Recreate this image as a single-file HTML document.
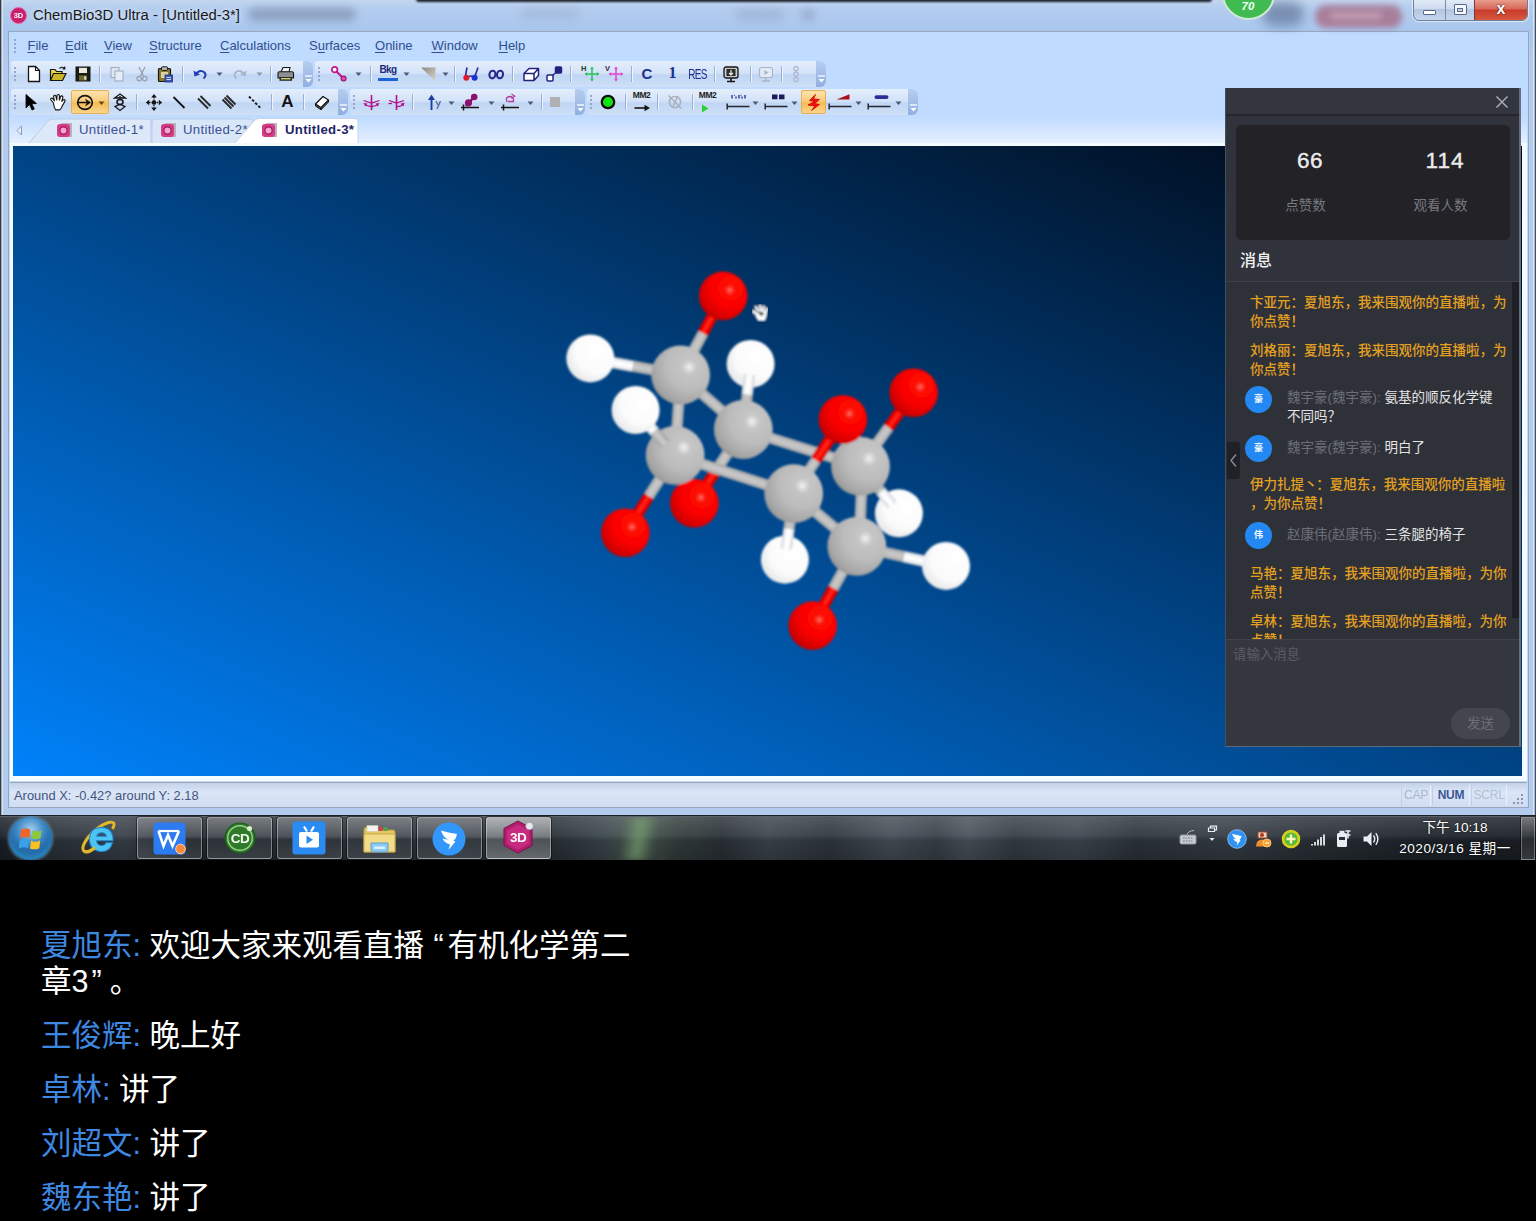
<!DOCTYPE html>
<html lang="zh-CN">
<head>
<meta charset="utf-8">
<title>ChemBio3D Ultra - [Untitled-3*]</title>
<style>
*{box-sizing:border-box;margin:0;padding:0}
html,body{width:1536px;height:1221px;overflow:hidden;background:#000}
body{position:relative;font-family:"Liberation Sans","Noto Sans CJK SC",sans-serif;}
.abs{position:absolute}
/* ---------- window frame ---------- */
#frame{left:0;top:0;width:1536px;height:816px;background:linear-gradient(180deg,#c3d6ef 0,#b4cdef 8px,#a8c6ee 31px,#b3cced 60px,#b3cced 100%);overflow:hidden}
#frame-l{left:0;top:0;width:3px;height:816px;background:linear-gradient(90deg,#2f353e 0,#3a4048 1.3px,#d8e4f4 1.6px,#d8e4f4 3px)}
#frame-r{left:1533px;top:0;width:3px;height:816px;background:linear-gradient(90deg,#d8e6f7 0,#d8e6f7 1.4px,#4a5666 1.7px,#3c4a5c 3px)}
#frame-b{left:0;top:815px;width:1536px;height:1px;background:#1a1e26}
#client{left:8px;top:30.5px;width:1520.5px;height:777px;background:#bfdbff;border:1.5px solid #98a5bb;overflow:hidden}
#title{left:33px;top:6px;font-size:14.9px;color:#1a1a1a;white-space:nowrap;line-height:18px;text-shadow:0 0 5px rgba(255,255,255,.9)}
/* ---------- canvas ---------- */
#cv-border{left:10px;top:143px;width:1517px;height:638px;background:#f4fbff}
#canvas{left:13px;top:145.5px;width:1508.5px;height:630px;background:linear-gradient(to bottom left,#01050f,#0082fa);overflow:hidden}
/* ---------- status bar ---------- */
#status{left:10px;top:782px;width:1517px;height:25px;background:linear-gradient(180deg,#c4d3ea 0,#dbe6f7 40%,#cfdcf2 100%);border-top:1px solid #9da4b2;font-size:12.9px;color:#44557e}
/* ---------- taskbar ---------- */
#taskbar{left:0;top:816px;width:1536px;height:44px;overflow:hidden;background:#2a2f35}
/* ---------- lower chat ---------- */
#chat{left:41px;top:927px;width:610px;font-size:30.5px;line-height:36px;color:#fff;font-family:"Liberation Sans","Noto Sans CJK SC",sans-serif}
#chat p{margin-bottom:18px}
#chat b{font-weight:400;color:#3f88e2}

/* ---------- dark live panel ---------- */
#panel{left:1225px;top:88px;width:296px;height:659px;border-right:2px solid #636e80;background:#31333c;overflow:hidden;border-left:1px solid #474e5c;border-bottom:1px solid #5d6878;font-family:"Liberation Sans","Noto Sans CJK SC",sans-serif}
#p-head{left:0;top:0;width:294px;height:28px;background:#34363f;border-bottom:2px solid #24262c}
#p-stats{left:10px;top:37px;width:274px;height:115px;background:#222227;border-radius:5px}
.num{top:58.5px;width:80px;text-align:center;font-size:22.5px;line-height:28px;color:#ececec;letter-spacing:.5px;font-weight:400;-webkit-text-stroke:.4px #ececec}
.lab{top:108px;margin-left:-1.5px;width:90px;text-align:center;font-size:13.5px;line-height:20px;color:#77797f}
#p-msgt{left:14px;top:162.5px;font-size:16px;line-height:20px;color:#f0f0f0;font-weight:500}
#p-list{left:0;top:193px;width:293px;height:358px;background:#2f3139;border-top:1px solid #3e4049;overflow:hidden}
#p-scroll{left:286px;top:0;width:7px;height:336px;background:#1f2026}
.m{left:24px;width:262px;font-size:13.5px;line-height:19px;margin-top:-.5px;color:#e4a020;font-weight:500;white-space:nowrap}
.u{left:61px;width:226px;font-size:13.5px;line-height:19px;margin-top:-1px;color:#e4e4e4;font-weight:400;white-space:nowrap}
.u i{font-style:normal;color:#6d6f78}
.av{left:19px;width:27px;height:27px;border-radius:50%;background:#2388f2;color:#fff;font-size:9px;line-height:27px;text-align:center;font-weight:700}
#p-input{left:0;top:551px;width:293px;height:108px;background:#35373f;border-top:1px solid #41434c}
#p-ph{left:7px;top:5px;font-size:13.4px;line-height:20px;color:#5b5d66}
#p-send{left:225px;top:68px;width:59px;height:31px;border-radius:16px;background:#44464e;color:#6c6e76;font-size:13.5px;line-height:31px;text-align:center}
#p-tab{left:1px;top:354px;width:13px;height:37px;background:#1f2127;border-radius:0 3px 3px 0}
/*CHROME-CSS-S*/
/* ---------- top chrome ---------- */
.mn{font-size:13px;line-height:18px;color:#2f4f8f;white-space:nowrap}
.mn u{text-decoration-thickness:1px;text-underline-offset:2px}
.tx{line-height:18px;color:#1b2f8f;text-align:center;white-space:nowrap}
.tb{font-size:13.2px;letter-spacing:.3px;line-height:18px;color:#3a4f92;white-space:nowrap}
/*CHROME-CSS-E*//*EXTRA-CSS-S*/
.clk{font-size:13.6px;line-height:18px;color:#fff;text-align:center;white-space:nowrap;text-shadow:0 0 2px rgba(0,0,0,.8)}
/*EXTRA-CSS-E*/</style>
</head>
<body>
<div id="frame" class="abs"></div>
<div id="frame-l" class="abs"></div>
<div id="frame-r" class="abs"></div>
<div id="title" class="abs">ChemBio3D Ultra - [Untitled-3*]</div>
<div id="client" class="abs"></div>
<!--CHROME-S--><div id="chrome"><div class="abs" style="left:14px;top:39px;width:2px;height:2px;background:#7f95bd;border-radius:1px"></div>
<div class="abs" style="left:14px;top:43px;width:2px;height:2px;background:#7f95bd;border-radius:1px"></div>
<div class="abs" style="left:14px;top:47px;width:2px;height:2px;background:#7f95bd;border-radius:1px"></div>
<div class="abs" style="left:14px;top:51px;width:2px;height:2px;background:#7f95bd;border-radius:1px"></div>
<div class="abs mn" style="left:27.5px;top:37px"><u>F</u>ile</div>
<div class="abs mn" style="left:65px;top:37px"><u>E</u>dit</div>
<div class="abs mn" style="left:104px;top:37px"><u>V</u>iew</div>
<div class="abs mn" style="left:149px;top:37px"><u>S</u>tructure</div>
<div class="abs mn" style="left:220px;top:37px"><u>C</u>alculations</div>
<div class="abs mn" style="left:309px;top:37px">S<u>u</u>rfaces</div>
<div class="abs mn" style="left:375px;top:37px"><u>O</u>nline</div>
<div class="abs mn" style="left:431.5px;top:37px"><u>W</u>indow</div>
<div class="abs mn" style="left:498.5px;top:37px"><u>H</u>elp</div>
<div class="abs" style="left:11px;top:60.5px;width:302px;height:26.0px;background:linear-gradient(180deg,#e4eefc 0,#d4e3f9 45%,#c0d6f4 55%,#cfe0f7 100%);border-radius:3px 6px 6px 3px"></div>
<div class="abs" style="left:303px;top:60.5px;width:10px;height:26.0px;background:linear-gradient(180deg,#b7cdf0 0,#8fafe0 100%);border-radius:0 6px 6px 0"></div>
<svg class="abs" style="left:303.5px;top:75.0px" width="9" height="9" viewBox="0 0 9 9"><path d="M1 1 H8" stroke="#fff" stroke-width="1.3"/><path d="M1.5 4 L7.5 4 L4.5 7.5 Z" fill="#fff"/></svg>
<div class="abs" style="left:315px;top:60.5px;width:511px;height:26.0px;background:linear-gradient(180deg,#e4eefc 0,#d4e3f9 45%,#c0d6f4 55%,#cfe0f7 100%);border-radius:3px 6px 6px 3px"></div>
<div class="abs" style="left:816px;top:60.5px;width:10px;height:26.0px;background:linear-gradient(180deg,#b7cdf0 0,#8fafe0 100%);border-radius:0 6px 6px 0"></div>
<svg class="abs" style="left:816.5px;top:75.0px" width="9" height="9" viewBox="0 0 9 9"><path d="M1 1 H8" stroke="#fff" stroke-width="1.3"/><path d="M1.5 4 L7.5 4 L4.5 7.5 Z" fill="#fff"/></svg>
<div class="abs" style="left:11px;top:89px;width:337px;height:26px;background:linear-gradient(180deg,#e4eefc 0,#d4e3f9 45%,#c0d6f4 55%,#cfe0f7 100%);border-radius:3px 6px 6px 3px"></div>
<div class="abs" style="left:338px;top:89px;width:10px;height:26px;background:linear-gradient(180deg,#b7cdf0 0,#8fafe0 100%);border-radius:0 6px 6px 0"></div>
<svg class="abs" style="left:338.5px;top:103.5px" width="9" height="9" viewBox="0 0 9 9"><path d="M1 1 H8" stroke="#fff" stroke-width="1.3"/><path d="M1.5 4 L7.5 4 L4.5 7.5 Z" fill="#fff"/></svg>
<div class="abs" style="left:350px;top:89px;width:235px;height:26px;background:linear-gradient(180deg,#e4eefc 0,#d4e3f9 45%,#c0d6f4 55%,#cfe0f7 100%);border-radius:3px 6px 6px 3px"></div>
<div class="abs" style="left:575px;top:89px;width:10px;height:26px;background:linear-gradient(180deg,#b7cdf0 0,#8fafe0 100%);border-radius:0 6px 6px 0"></div>
<svg class="abs" style="left:575.5px;top:103.5px" width="9" height="9" viewBox="0 0 9 9"><path d="M1 1 H8" stroke="#fff" stroke-width="1.3"/><path d="M1.5 4 L7.5 4 L4.5 7.5 Z" fill="#fff"/></svg>
<div class="abs" style="left:587px;top:89px;width:331px;height:26px;background:linear-gradient(180deg,#e4eefc 0,#d4e3f9 45%,#c0d6f4 55%,#cfe0f7 100%);border-radius:3px 6px 6px 3px"></div>
<div class="abs" style="left:908px;top:89px;width:10px;height:26px;background:linear-gradient(180deg,#b7cdf0 0,#8fafe0 100%);border-radius:0 6px 6px 0"></div>
<svg class="abs" style="left:908.5px;top:103.5px" width="9" height="9" viewBox="0 0 9 9"><path d="M1 1 H8" stroke="#fff" stroke-width="1.3"/><path d="M1.5 4 L7.5 4 L4.5 7.5 Z" fill="#fff"/></svg>
<div class="abs" style="left:14px;top:66.5px;width:2px;height:2px;background:#7f95bd;border-radius:1px"></div>
<div class="abs" style="left:14px;top:70.5px;width:2px;height:2px;background:#7f95bd;border-radius:1px"></div>
<div class="abs" style="left:14px;top:74.5px;width:2px;height:2px;background:#7f95bd;border-radius:1px"></div>
<div class="abs" style="left:14px;top:78.5px;width:2px;height:2px;background:#7f95bd;border-radius:1px"></div>
<div class="abs" style="left:318px;top:66.5px;width:2px;height:2px;background:#7f95bd;border-radius:1px"></div>
<div class="abs" style="left:318px;top:70.5px;width:2px;height:2px;background:#7f95bd;border-radius:1px"></div>
<div class="abs" style="left:318px;top:74.5px;width:2px;height:2px;background:#7f95bd;border-radius:1px"></div>
<div class="abs" style="left:318px;top:78.5px;width:2px;height:2px;background:#7f95bd;border-radius:1px"></div>
<div class="abs" style="left:14px;top:95px;width:2px;height:2px;background:#7f95bd;border-radius:1px"></div>
<div class="abs" style="left:14px;top:99px;width:2px;height:2px;background:#7f95bd;border-radius:1px"></div>
<div class="abs" style="left:14px;top:103px;width:2px;height:2px;background:#7f95bd;border-radius:1px"></div>
<div class="abs" style="left:14px;top:107px;width:2px;height:2px;background:#7f95bd;border-radius:1px"></div>
<div class="abs" style="left:353px;top:95px;width:2px;height:2px;background:#7f95bd;border-radius:1px"></div>
<div class="abs" style="left:353px;top:99px;width:2px;height:2px;background:#7f95bd;border-radius:1px"></div>
<div class="abs" style="left:353px;top:103px;width:2px;height:2px;background:#7f95bd;border-radius:1px"></div>
<div class="abs" style="left:353px;top:107px;width:2px;height:2px;background:#7f95bd;border-radius:1px"></div>
<div class="abs" style="left:590px;top:95px;width:2px;height:2px;background:#7f95bd;border-radius:1px"></div>
<div class="abs" style="left:590px;top:99px;width:2px;height:2px;background:#7f95bd;border-radius:1px"></div>
<div class="abs" style="left:590px;top:103px;width:2px;height:2px;background:#7f95bd;border-radius:1px"></div>
<div class="abs" style="left:590px;top:107px;width:2px;height:2px;background:#7f95bd;border-radius:1px"></div>
<svg class="abs" style="left:25.0px;top:64.5px" width="18" height="18" viewBox="0 0 18 18"><path d="M3.5 1.5 H10.5 L14.5 5.5 V16.5 H3.5 Z" fill="#fff" stroke="#151515" stroke-width="1.3"/><path d="M10.5 1.5 V5.5 H14.5" fill="none" stroke="#151515" stroke-width="1.1"/></svg>
<svg class="abs" style="left:48.5px;top:64.5px" width="18" height="18" viewBox="0 0 18 18"><path d="M1.5 15.5 V4.5 H6 L7.5 6.5 H13 V8.5" fill="#e8d44a" stroke="#151515" stroke-width="1.2"/><path d="M1.5 15.5 L4.5 8.5 H17 L13.5 15.5 Z" fill="#c9b62a" stroke="#151515" stroke-width="1.2"/><path d="M10.5 3.5 Q13 1 15.5 3.5 M15.8 1.5 V4 H13.4" fill="none" stroke="#151515" stroke-width="1.1"/></svg>
<svg class="abs" style="left:73.5px;top:64.5px" width="18" height="18" viewBox="0 0 18 18"><rect x="2" y="2" width="14" height="14" fill="#1b1b14" stroke="#151515" stroke-width="1"/><rect x="5" y="2.8" width="8" height="5.2" fill="#e9e9e0"/><rect x="5" y="10.5" width="8" height="5" fill="#6b6a2a"/><rect x="10.2" y="11.3" width="2" height="3.4" fill="#ddd"/></svg>
<div class="abs" style="left:98.5px;top:65.5px;width:1px;height:16px;background:#9ab0d4"></div>
<div class="abs" style="left:99.5px;top:65.5px;width:1px;height:16px;background:#eef4fd"></div>
<svg class="abs" style="left:107.5px;top:64.5px" width="18" height="18" viewBox="0 0 18 18"><rect x="3" y="2.5" width="8" height="10" fill="#dfe6f2" stroke="#9aa7bd"/><rect x="7" y="6" width="8" height="10" fill="#e6ecf6" stroke="#9aa7bd"/></svg>
<svg class="abs" style="left:132.5px;top:64.5px" width="18" height="18" viewBox="0 0 18 18"><path d="M6 2 L10.5 11 M12 2 L7.5 11" stroke="#98a3b6" stroke-width="1.4" fill="none"/><circle cx="6.2" cy="13.6" r="2.2" fill="none" stroke="#98a3b6" stroke-width="1.3"/><circle cx="11.8" cy="13.6" r="2.2" fill="none" stroke="#98a3b6" stroke-width="1.3"/></svg>
<svg class="abs" style="left:156.0px;top:64.5px" width="18" height="18" viewBox="0 0 18 18"><rect x="2.5" y="3.5" width="12" height="13" rx="1" fill="#8a7a2c" stroke="#151515" stroke-width="1.2"/><rect x="5.5" y="1.8" width="6" height="3.6" rx="1" fill="#b9b9b9" stroke="#151515" stroke-width="1"/><rect x="5" y="7" width="7" height="6" fill="#d9d2a2"/><rect x="9" y="10" width="7.5" height="7" fill="#3957b8" stroke="#1d2f7a" stroke-width="0.8"/><path d="M10.5 12.5 H15 M10.5 14.5 H15" stroke="#dfe6ff" stroke-width="0.9"/></svg>
<div class="abs" style="left:182.0px;top:65.5px;width:1px;height:16px;background:#9ab0d4"></div>
<div class="abs" style="left:183.0px;top:65.5px;width:1px;height:16px;background:#eef4fd"></div>
<svg class="abs" style="left:191.0px;top:64.5px" width="18" height="18" viewBox="0 0 18 18"><path d="M4.5 9.5 Q9 3.5 13.5 7.5 Q16 10.5 12.5 13.5" fill="none" stroke="#2340b0" stroke-width="2"/><path d="M2.5 5.5 L3.5 11.5 L9 9.5 Z" fill="#2340b0"/></svg>
<svg class="abs" style="left:215.5px;top:71.0px" width="7" height="6" viewBox="0 0 7 6"><path d="M0.5 1.5 L6.5 1.5 L3.5 5 Z" fill="#4a5a78"/></svg>
<svg class="abs" style="left:231.0px;top:64.5px" width="18" height="18" viewBox="0 0 18 18"><path d="M13.5 9.5 Q9 3.5 4.5 7.5 Q2 10.5 5.5 13.5" fill="none" stroke="#aab4c8" stroke-width="1.8"/><path d="M15.5 5.5 L14.5 11.5 L9 9.5 Z" fill="#aab4c8"/></svg>
<svg class="abs" style="left:255.5px;top:71.0px" width="7" height="6" viewBox="0 0 7 6"><path d="M0.5 1.5 L6.5 1.5 L3.5 5 Z" fill="#8b98b0"/></svg>
<div class="abs" style="left:269.5px;top:65.5px;width:1px;height:16px;background:#9ab0d4"></div>
<div class="abs" style="left:270.5px;top:65.5px;width:1px;height:16px;background:#eef4fd"></div>
<svg class="abs" style="left:276.0px;top:64.5px" width="20" height="18" viewBox="0 0 20 18"><path d="M5 7 L7 2.5 H14 L13 7" fill="#f1f1f1" stroke="#151515" stroke-width="1.1"/><path d="M2 8 Q2 6.8 3.5 6.8 H16 Q17.5 6.8 17.5 8 V13 H2 Z" fill="#8c8f94" stroke="#151515" stroke-width="1.1"/><rect x="3.5" y="12" width="12.5" height="3.8" fill="#2a2a2a"/><rect x="5" y="13" width="9.5" height="1.4" fill="#cfd66a"/></svg>
<svg class="abs" style="left:330.0px;top:64.5px" width="18" height="18" viewBox="0 0 18 18"><path d="M5 5 L13 13" stroke="#c2188c" stroke-width="2.2"/><circle cx="4.6" cy="4.6" r="2.8" fill="#fff" stroke="#c2188c" stroke-width="1.7"/><circle cx="13.6" cy="13.6" r="2.4" fill="#e24bb0" stroke="#a01070" stroke-width="1.2"/></svg>
<svg class="abs" style="left:354.5px;top:71.0px" width="7" height="6" viewBox="0 0 7 6"><path d="M0.5 1.5 L6.5 1.5 L3.5 5 Z" fill="#4a5a78"/></svg>
<div class="abs" style="left:369.5px;top:65.5px;width:1px;height:16px;background:#9ab0d4"></div>
<div class="abs" style="left:370.5px;top:65.5px;width:1px;height:16px;background:#eef4fd"></div>
<div class="abs" style="left:378px;top:63.5px;width:20px;font-size:10px;line-height:12px;color:#1a2a7a;letter-spacing:-0.6px;font-weight:700;text-align:center">Bkg</div>
<div class="abs" style="left:378px;top:77.5px;width:20px;height:3.5px;background:#1c63d8"></div>
<svg class="abs" style="left:402.5px;top:71.0px" width="7" height="6" viewBox="0 0 7 6"><path d="M0.5 1.5 L6.5 1.5 L3.5 5 Z" fill="#4a5a78"/></svg>
<svg class="abs" style="left:418.5px;top:64.5px" width="18" height="18" viewBox="0 0 18 18"><defs><linearGradient id="tg" x1="0" y1="0" x2="1" y2="1"><stop offset="0" stop-color="#8d8780"/><stop offset="1" stop-color="#d9d6d0"/></linearGradient></defs><path d="M2 2.5 H16.5 V16.5 Z" fill="url(#tg)"/></svg>
<svg class="abs" style="left:441.5px;top:71.0px" width="7" height="6" viewBox="0 0 7 6"><path d="M0.5 1.5 L6.5 1.5 L3.5 5 Z" fill="#4a5a78"/></svg>
<div class="abs" style="left:453.5px;top:65.5px;width:1px;height:16px;background:#9ab0d4"></div>
<div class="abs" style="left:454.5px;top:65.5px;width:1px;height:16px;background:#eef4fd"></div>
<svg class="abs" style="left:462.0px;top:64.5px" width="19" height="18" viewBox="0 0 19 18"><path d="M5 2.5 L3.5 11 M16 2.5 L13 11" stroke="#2a2a9a" stroke-width="1.6" fill="none"/><path d="M6 12.5 Q9 9.5 11 12.5" stroke="#2a2a9a" stroke-width="1.4" fill="none"/><circle cx="4.3" cy="12.8" r="3" fill="#e01a2a"/><circle cx="12.6" cy="12.8" r="3" fill="#1a30d8"/></svg>
<svg class="abs" style="left:487.0px;top:64.5px" width="19" height="18" viewBox="0 0 19 18"><ellipse cx="5.4" cy="9.5" rx="3" ry="3.8" fill="none" stroke="#27278f" stroke-width="2" transform="rotate(14 5.4 9.5)"/><ellipse cx="13" cy="9.5" rx="3" ry="3.8" fill="none" stroke="#27278f" stroke-width="2" transform="rotate(14 13 9.5)"/></svg>
<div class="abs" style="left:512.0px;top:65.5px;width:1px;height:16px;background:#9ab0d4"></div>
<div class="abs" style="left:513.0px;top:65.5px;width:1px;height:16px;background:#eef4fd"></div>
<svg class="abs" style="left:521.5px;top:64.5px" width="19" height="18" viewBox="0 0 19 18"><path d="M2 8.5 L7 3.5 H16.5 L12 8.5 Z M2 8.5 H12 V15.5 H2 Z M12 8.5 L16.5 3.5 V10.5 L12 15.5" fill="#fff" stroke="#23237e" stroke-width="1.5" stroke-linejoin="round"/></svg>
<svg class="abs" style="left:544.5px;top:64.5px" width="19" height="18" viewBox="0 0 19 18"><rect x="2" y="10" width="6" height="6" rx="1" fill="#fff" stroke="#23237e" stroke-width="1.5"/><rect x="10.5" y="2" width="6" height="6" rx="1" fill="#23237e" stroke="#23237e" stroke-width="1.5"/><path d="M7.5 10.5 L11 7.5" stroke="#23237e" stroke-width="1.4"/></svg>
<div class="abs" style="left:569.5px;top:65.5px;width:1px;height:16px;background:#9ab0d4"></div>
<div class="abs" style="left:570.5px;top:65.5px;width:1px;height:16px;background:#eef4fd"></div>
<svg class="abs" style="left:581.0px;top:64.0px" width="20" height="19" viewBox="0 0 20 19"><text x="0" y="6.5" font-size="7.5" font-weight="700" fill="#1a3a1a" font-family="Liberation Sans,sans-serif">H</text><path d="M11 3 V17 M4 10 H18" stroke="#2fc25a" stroke-width="1.5"/><path d="M11 3 l-2 2.2 h4 Z M11 17 l-2 -2.2 h4 Z M4 10 l2.2 -2 v4 Z M18 10 l-2.2 -2 v4 Z" fill="#2fc25a"/></svg>
<svg class="abs" style="left:605.0px;top:64.0px" width="20" height="19" viewBox="0 0 20 19"><text x="0" y="6.5" font-size="7.5" font-weight="700" fill="#3a1a3a" font-family="Liberation Sans,sans-serif">V</text><path d="M11 3 V17 M4 10 H18" stroke="#e645d0" stroke-width="1.5"/><path d="M11 3 l-2 2.2 h4 Z M11 17 l-2 -2.2 h4 Z M4 10 l2.2 -2 v4 Z M18 10 l-2.2 -2 v4 Z" fill="#e645d0"/></svg>
<div class="abs" style="left:630.5px;top:65.5px;width:1px;height:16px;background:#9ab0d4"></div>
<div class="abs" style="left:631.5px;top:65.5px;width:1px;height:16px;background:#eef4fd"></div>
<div class="abs tx" style="left:640px;top:64.5px;width:14px;font-size:15px;font-weight:700">C</div>
<div class="abs tx" style="left:665.5px;top:63.5px;width:14px;font-size:16px;font-weight:700;font-family:'Liberation Serif',serif">1</div>
<div class="abs tx" style="left:686px;top:65.5px;width:23px;font-size:10px;letter-spacing:-0.7px;font-weight:400;transform:scaleY(1.4)">RES</div>
<div class="abs" style="left:713.5px;top:65.5px;width:1px;height:16px;background:#9ab0d4"></div>
<div class="abs" style="left:714.5px;top:65.5px;width:1px;height:16px;background:#eef4fd"></div>
<svg class="abs" style="left:722.0px;top:64.5px" width="18" height="18" viewBox="0 0 18 18"><rect x="2" y="2" width="14" height="11" rx="2" fill="#c9c9c9" stroke="#151515" stroke-width="1.3"/><rect x="4.5" y="4" width="9" height="7" fill="#2b2b2b"/><path d="M9 5 V10 M7 8 L9 10 L11 8" stroke="#eee" stroke-width="1.2" fill="none"/><path d="M5 16.5 H13 M9 13 V16" stroke="#151515" stroke-width="1.6"/></svg>
<div class="abs" style="left:749.5px;top:65.5px;width:1px;height:16px;background:#9ab0d4"></div>
<div class="abs" style="left:750.5px;top:65.5px;width:1px;height:16px;background:#eef4fd"></div>
<svg class="abs" style="left:757.0px;top:64.5px" width="18" height="18" viewBox="0 0 18 18"><rect x="2.5" y="2.5" width="13" height="10" rx="2" fill="#e3eaf6" stroke="#a9b5ca" stroke-width="1.2"/><path d="M7.5 5 L11.5 7.5 L7.5 10 Z" fill="#a9b5ca"/><path d="M5 16 H13 M9 13 V16" stroke="#a9b5ca" stroke-width="1.4"/></svg>
<div class="abs" style="left:781.0px;top:65.5px;width:1px;height:16px;background:#9ab0d4"></div>
<div class="abs" style="left:782.0px;top:65.5px;width:1px;height:16px;background:#eef4fd"></div>
<svg class="abs" style="left:791.0px;top:64.5px" width="10" height="18" viewBox="0 0 10 18"><circle cx="5" cy="3.5" r="2.1" fill="none" stroke="#a9b5ca" stroke-width="1.2"/><circle cx="5" cy="9" r="2.1" fill="none" stroke="#a9b5ca" stroke-width="1.2"/><circle cx="5" cy="14.5" r="2.1" fill="none" stroke="#a9b5ca" stroke-width="1.2"/></svg>
<svg class="abs" style="left:22.0px;top:92.5px" width="18" height="19" viewBox="0 0 18 19"><path d="M4 1.5 V15 L7.5 11.5 L10 17 L12.3 16 L9.8 10.7 L14.5 10.5 Z" fill="#000" stroke="#000" stroke-width="0.8" stroke-linejoin="round"/></svg>
<svg class="abs" style="left:48.0px;top:92.5px" width="19" height="19" viewBox="0 0 19 19"><path d="M5.5 10 L3 7 Q2 5.6 3.4 5.2 Q4.3 5.1 5 6 L6.4 7.8 L5.6 3.6 Q5.6 2.2 6.9 2.3 Q7.8 2.5 8 3.6 L8.8 7 L9 2.6 Q9.3 1.3 10.5 1.5 Q11.5 1.8 11.4 3 L11.4 7 L12.6 3.6 Q13.2 2.5 14.2 2.9 Q15.2 3.4 14.8 4.7 L13.8 8.4 L15.2 6.9 Q16.2 6.2 16.9 7 Q17.4 7.8 16.7 8.8 L14.4 12.6 Q13.6 15.6 11.8 16.8 L7.6 16.8 Q5.8 14 5.5 10 Z" fill="#fff" stroke="#151515" stroke-width="1.15" stroke-linejoin="round"/></svg>
<div class="abs" style="left:70.5px;top:90px;width:38px;height:24px;background:linear-gradient(180deg,#fce3ac 0,#f9cd7c 45%,#f6bb55 55%,#fbd68c 100%);border:1px solid #e5b055;border-radius:2px"></div>
<svg class="abs" style="left:76.0px;top:92.5px" width="18" height="19" viewBox="0 0 18 19"><ellipse cx="9" cy="9.5" rx="7.3" ry="6.8" fill="none" stroke="#151515" stroke-width="1.7"/><path d="M1.8 9.5 H11" stroke="#151515" stroke-width="1.5"/><path d="M9 5.5 L15 9.5 L9 13.5 L10.8 9.5 Z" fill="#151515"/></svg>
<svg class="abs" style="left:98.0px;top:99.5px" width="7" height="6" viewBox="0 0 7 6"><path d="M0.5 1.5 L6.5 1.5 L3.5 5 Z" fill="#6a4a10"/></svg>
<svg class="abs" style="left:111.0px;top:92.5px" width="18" height="19" viewBox="0 0 18 19"><path d="M9 1 L14.5 5 L3.5 5 Z" fill="none" stroke="#151515" stroke-width="1.3"/><path d="M9 3 L11.5 5 H6.5 Z" fill="#151515"/><ellipse cx="9" cy="9" rx="3" ry="2.5" fill="none" stroke="#151515" stroke-width="1.5"/><path d="M4 13.5 L9 17.5 L14 13.5 L9 11.5 Z" fill="none" stroke="#151515" stroke-width="1.3"/></svg>
<div class="abs" style="left:135.5px;top:94px;width:1px;height:16px;background:#9ab0d4"></div>
<div class="abs" style="left:136.5px;top:94px;width:1px;height:16px;background:#eef4fd"></div>
<svg class="abs" style="left:145.0px;top:92.5px" width="18" height="19" viewBox="0 0 18 19"><path d="M9 1 L11.8 4.4 H6.2 Z M9 18 L11.8 14.6 H6.2 Z M0.8 9.5 L4.2 6.7 V12.3 Z M17.2 9.5 L13.8 6.7 V12.3 Z" fill="#151515"/><path d="M9 4 V15 M4 9.5 H14" stroke="#151515" stroke-width="1.3" stroke-dasharray="1.4 1.2"/><circle cx="9" cy="9.5" r="2.3" fill="#151515"/></svg>
<svg class="abs" style="left:170.0px;top:93.0px" width="18" height="18" viewBox="0 0 18 18"><path d="M3.5 4 L14.5 15" stroke="#151515" stroke-width="1.8"/></svg>
<svg class="abs" style="left:195.0px;top:93.0px" width="18" height="18" viewBox="0 0 18 18"><path d="M3 5.5 L13 15.5 M5.5 3 L15.5 13" stroke="#2a2a2a" stroke-width="1.9"/></svg>
<svg class="abs" style="left:220.0px;top:93.0px" width="18" height="18" viewBox="0 0 18 18"><path d="M2.5 6.5 L11.5 15.5 M4.5 4.5 L13.5 13.5 M6.5 2.5 L15.5 11.5" stroke="#2a2a2a" stroke-width="1.9"/></svg>
<svg class="abs" style="left:246.0px;top:93.0px" width="18" height="18" viewBox="0 0 18 18"><path d="M3 3.5 L15 15.5" stroke="#151515" stroke-width="1.9" stroke-dasharray="2.6 1.8"/></svg>
<div class="abs" style="left:271.0px;top:94px;width:1px;height:16px;background:#9ab0d4"></div>
<div class="abs" style="left:272.0px;top:94px;width:1px;height:16px;background:#eef4fd"></div>
<div class="abs" style="left:280px;top:92px;width:15px;font-size:17px;line-height:20px;font-weight:700;color:#111;text-align:center">A</div>
<div class="abs" style="left:303.0px;top:94px;width:1px;height:16px;background:#9ab0d4"></div>
<div class="abs" style="left:304.0px;top:94px;width:1px;height:16px;background:#eef4fd"></div>
<svg class="abs" style="left:312.5px;top:93.0px" width="18" height="18" viewBox="0 0 18 18"><path d="M2.5 11 L10 3.5 L15.5 7 L8 14.8 Z" fill="#fff" stroke="#151515" stroke-width="1.3" stroke-linejoin="round"/><path d="M2.5 11 L8 14.8 L8 16.8 L2.5 13 Z M8 14.8 L15.5 7 V9 L8 16.8 Z" fill="#555" stroke="#151515" stroke-width="1" stroke-linejoin="round"/></svg>
<svg class="abs" style="left:361.5px;top:92.5px" width="19" height="19" viewBox="0 0 19 19"><path d="M9.5 2 V17" stroke="#b0128a" stroke-width="1.6"/><path d="M1.5 7.5 L9.5 10 L17.5 7.5" fill="none" stroke="#b0128a" stroke-width="1.3"/><path d="M3 11.5 Q9.5 15.5 16 11.5" fill="none" stroke="#b0128a" stroke-width="1.3"/><path d="M1.5 10 L3.4 13.6 L5.4 10.6 Z M17.5 10 L15.6 13.6 L13.6 10.6 Z" fill="#b0128a"/></svg>
<svg class="abs" style="left:387.0px;top:92.5px" width="19" height="19" viewBox="0 0 19 19"><path d="M9.5 2 V17" stroke="#b0128a" stroke-width="1.6"/><path d="M2 7.5 L9.5 10 L17 7.5" fill="none" stroke="#b0128a" stroke-width="1.3"/><path d="M9.5 13.5 Q14 14 16 11" fill="none" stroke="#b0128a" stroke-width="1.3"/><path d="M17.6 9.4 L16.4 13.4 L13.6 10.8 Z" fill="#b0128a"/><path d="M1.5 10.5 H5" stroke="#b0128a" stroke-width="1.3"/></svg>
<div class="abs" style="left:412.0px;top:94px;width:1px;height:16px;background:#9ab0d4"></div>
<div class="abs" style="left:413.0px;top:94px;width:1px;height:16px;background:#eef4fd"></div>
<svg class="abs" style="left:425.5px;top:92.5px" width="17" height="19" viewBox="0 0 17 19"><path d="M5.5 17 V5" stroke="#1a3fa8" stroke-width="1.9"/><path d="M5.5 1.5 L9 7 H2 Z" fill="#1a3fa8"/><path d="M10 8 L12 12 M14.5 8 L11 16" stroke="#5a6aa8" stroke-width="1.4" fill="none"/></svg>
<svg class="abs" style="left:448.0px;top:99.5px" width="7" height="6" viewBox="0 0 7 6"><path d="M0.5 1.5 L6.5 1.5 L3.5 5 Z" fill="#4a5a78"/></svg>
<svg class="abs" style="left:460.0px;top:92.0px" width="20" height="20" viewBox="0 0 20 20"><path d="M1 15.5 H19 M3.5 12.5 V18.5" stroke="#151515" stroke-width="1.5"/><path d="M6 14 L14 5" stroke="#7a0c60" stroke-width="2.4"/><circle cx="8.5" cy="10.8" r="3.6" fill="#8e0f70"/><circle cx="14.2" cy="5" r="3.3" fill="#8e0f70"/></svg>
<svg class="abs" style="left:487.5px;top:99.5px" width="7" height="6" viewBox="0 0 7 6"><path d="M0.5 1.5 L6.5 1.5 L3.5 5 Z" fill="#4a5a78"/></svg>
<svg class="abs" style="left:500.0px;top:92.0px" width="20" height="20" viewBox="0 0 20 20"><path d="M1 15.5 H19 M3.5 12.5 V18.5" stroke="#151515" stroke-width="1.5"/><path d="M7 10 Q5 5 9.5 4.5 Q14 4.5 13.5 9.5 H8" fill="none" stroke="#b33aa0" stroke-width="1.3"/><path d="M11.5 2 L14.8 4.3 L11.4 6.4" fill="none" stroke="#b33aa0" stroke-width="1.2"/></svg>
<svg class="abs" style="left:526.5px;top:99.5px" width="7" height="6" viewBox="0 0 7 6"><path d="M0.5 1.5 L6.5 1.5 L3.5 5 Z" fill="#4a5a78"/></svg>
<div class="abs" style="left:540.5px;top:94px;width:1px;height:16px;background:#9ab0d4"></div>
<div class="abs" style="left:541.5px;top:94px;width:1px;height:16px;background:#eef4fd"></div>
<div class="abs" style="left:550px;top:97px;width:10px;height:10px;background:#b0b0b3"></div>
<svg class="abs" style="left:598.5px;top:93.0px" width="18" height="18" viewBox="0 0 18 18"><circle cx="9" cy="9" r="6.2" fill="#12e412" stroke="#0c0c0c" stroke-width="2.3"/></svg>
<div class="abs" style="left:624.5px;top:94px;width:1px;height:16px;background:#9ab0d4"></div>
<div class="abs" style="left:625.5px;top:94px;width:1px;height:16px;background:#eef4fd"></div>
<div class="abs" style="left:630.5px;top:90px;width:22px;font-size:8.5px;line-height:10px;font-weight:700;color:#222;letter-spacing:-0.5px;text-align:center">MM2</div>
<svg class="abs" style="left:633.5px;top:103.5px" width="16" height="8" viewBox="0 0 16 8"><path d="M0.5 4 H13" stroke="#151515" stroke-width="1.6"/><path d="M16 4 L10.5 0.8 V7.2 Z" fill="#151515"/></svg>
<div class="abs" style="left:657.0px;top:94px;width:1px;height:16px;background:#9ab0d4"></div>
<div class="abs" style="left:658.0px;top:94px;width:1px;height:16px;background:#eef4fd"></div>
<svg class="abs" style="left:666.0px;top:93.0px" width="18" height="18" viewBox="0 0 18 18"><circle cx="9" cy="9" r="5.6" fill="none" stroke="#a8aeba" stroke-width="1.5"/><path d="M2.5 2.5 L15.5 15.5 M12 3 L6.5 14.5" stroke="#a8aeba" stroke-width="1.4"/></svg>
<div class="abs" style="left:692.0px;top:94px;width:1px;height:16px;background:#9ab0d4"></div>
<div class="abs" style="left:693.0px;top:94px;width:1px;height:16px;background:#eef4fd"></div>
<div class="abs" style="left:696.5px;top:90px;width:22px;font-size:8.5px;line-height:10px;font-weight:700;color:#222;letter-spacing:-0.5px;text-align:center">MM2</div>
<svg class="abs" style="left:701.0px;top:103.5px" width="9" height="9" viewBox="0 0 9 9"><path d="M1 0.5 L7.5 4.5 L1 8.5 Z" fill="#2fd02f"/></svg>
<svg class="abs" style="left:725.0px;top:92.0px" width="26" height="20" viewBox="0 0 26 20"><path d="M1.5 14.5 H24.5 M2.2 11.5 V17.5" stroke="#26262e" stroke-width="1.5"/><path d="M7 3 V6.5 M11 4.5 V6.5 M14 3 V6.5 M17 4.5 V6.5 M20 3 V6.5" stroke="#1b2c8c" stroke-width="1.3"/><path d="M9 3.2 h1 M15.5 3.2 h1" stroke="#1b2c8c" stroke-width="1.1"/></svg>
<svg class="abs" style="left:752.0px;top:99.5px" width="7" height="6" viewBox="0 0 7 6"><path d="M0.5 1.5 L6.5 1.5 L3.5 5 Z" fill="#4a5a78"/></svg>
<svg class="abs" style="left:763.0px;top:92.0px" width="26" height="20" viewBox="0 0 26 20"><path d="M1.5 14.5 H24.5 M2.2 11.5 V17.5" stroke="#26262e" stroke-width="1.5"/><rect x="9" y="2.5" width="5.5" height="4.8" fill="#1c1c5c"/><rect x="16" y="2.5" width="5.5" height="4.8" fill="#1c1c5c"/></svg>
<svg class="abs" style="left:790.5px;top:99.5px" width="7" height="6" viewBox="0 0 7 6"><path d="M0.5 1.5 L6.5 1.5 L3.5 5 Z" fill="#4a5a78"/></svg>
<div class="abs" style="left:801px;top:90px;width:25px;height:24px;background:linear-gradient(180deg,#fce3ac 0,#f9cd7c 45%,#f6bb55 55%,#fbd68c 100%);border:1px solid #e5b055;border-radius:2px"></div>
<svg class="abs" style="left:804.5px;top:92.5px" width="18" height="19" viewBox="0 0 18 19"><path d="M10.5 1.5 L4.5 7.5 L9.5 8.5 L3 12 L10 13 L6.5 17.5 L14.5 11.5 L9.5 10.5 L14.5 6.5 L8.5 6 Z" fill="#f01010" stroke="#d00000" stroke-width="0.8" stroke-linejoin="round"/></svg>
<svg class="abs" style="left:827.0px;top:92.0px" width="26" height="20" viewBox="0 0 26 20"><path d="M1.5 14.5 H24.5 M2.2 11.5 V17.5" stroke="#26262e" stroke-width="1.5"/><path d="M9.5 7.5 L22.5 7.5 L22.5 2.2 Z" fill="#a8101c"/></svg>
<svg class="abs" style="left:854.5px;top:99.5px" width="7" height="6" viewBox="0 0 7 6"><path d="M0.5 1.5 L6.5 1.5 L3.5 5 Z" fill="#4a5a78"/></svg>
<svg class="abs" style="left:866.0px;top:92.0px" width="26" height="20" viewBox="0 0 26 20"><path d="M1.5 14.5 H24.5 M2.2 11.5 V17.5" stroke="#26262e" stroke-width="1.5"/><rect x="8.5" y="3.2" width="14" height="3.8" rx="1.9" fill="#2b2f9c"/></svg>
<svg class="abs" style="left:894.5px;top:99.5px" width="7" height="6" viewBox="0 0 7 6"><path d="M0.5 1.5 L6.5 1.5 L3.5 5 Z" fill="#4a5a78"/></svg>
<div class="abs" style="left:10px;top:116px;width:1517px;height:28px;background:linear-gradient(180deg,rgba(255,255,255,0) 0,rgba(255,255,255,.28) 45%,rgba(255,255,255,.62) 100%)"></div>
<svg class="abs" style="left:15.5px;top:124.5px" width="7" height="11" viewBox="0 0 7 11"><path d="M5.5 1 L1 5.5 L5.5 10 Z" fill="#e8effa" stroke="#8e9bb8" stroke-width="1"/></svg>
<svg class="abs" style="left:28px;top:117px" width="340" height="28" viewBox="0 0 340 28"><path d="M0 27 L20 4 Q22 2 25 2 H120 Q123 2 123 5 V27 Z" fill="#dde8f9" stroke="#b9cbe8" stroke-width="1"/><path d="M124 27 V5 Q124 2 127 2 H222 Q225 2 225 5 V27 Z" fill="#d9e6f8" stroke="#b9cbe8" stroke-width="1"/><path d="M206 27 L226 4 Q228 1.5 231 1.5 H327 Q330 1.5 330 5 V27 Z" fill="#ffffff" stroke="#c5d3ea" stroke-width="1"/></svg>
<svg class="abs" style="left:56.0px;top:122.3px" width="17" height="16" viewBox="0 0 17 16"><rect x="5" y="1" width="11" height="14" fill="#b9b4b8"/><rect x="1" y="2" width="13" height="13" rx="3" fill="#d43a86"/><circle cx="7.5" cy="8.5" r="3.6" fill="#f6a6cc" stroke="#a01860" stroke-width="1.2"/></svg>
<svg class="abs" style="left:159.5px;top:122.3px" width="17" height="16" viewBox="0 0 17 16"><rect x="5" y="1" width="11" height="14" fill="#b9b4b8"/><rect x="1" y="2" width="13" height="13" rx="3" fill="#d43a86"/><circle cx="7.5" cy="8.5" r="3.6" fill="#f6a6cc" stroke="#a01860" stroke-width="1.2"/></svg>
<svg class="abs" style="left:261.0px;top:122.3px" width="17" height="16" viewBox="0 0 17 16"><rect x="5" y="1" width="11" height="14" fill="#b9b4b8"/><rect x="1" y="2" width="13" height="13" rx="3" fill="#d43a86"/><circle cx="7.5" cy="8.5" r="3.6" fill="#f6a6cc" stroke="#a01860" stroke-width="1.2"/></svg>
<div class="abs tb" style="left:79px;top:121px">Untitled-1*</div>
<div class="abs tb" style="left:183px;top:121px">Untitled-2*</div>
<div class="abs tb" style="left:285px;top:121px;font-weight:700;color:#1d2468">Untitled-3*</div></div><!--CHROME-E-->
<div id="cv-border" class="abs"></div>
<div id="canvas" class="abs"><!--MOL-S--><svg class="abs" style="left:0;top:0" width="1509" height="630" viewBox="0 0 1509 630">
<defs>
<radialGradient id="gC" cx="0.66" cy="0.34" r="0.88"><stop offset="0" stop-color="#c9c9c9"/><stop offset="0.45" stop-color="#bcbcbc"/><stop offset="0.72" stop-color="#a6a6a6"/><stop offset="1" stop-color="#7c7c7d"/></radialGradient>
<radialGradient id="gO" cx="0.66" cy="0.34" r="0.88"><stop offset="0" stop-color="#ff1208"/><stop offset="0.45" stop-color="#fb0000"/><stop offset="0.72" stop-color="#d40000"/><stop offset="1" stop-color="#960000"/></radialGradient>
<radialGradient id="gH" cx="0.64" cy="0.36" r="0.88"><stop offset="0" stop-color="#ffffff"/><stop offset="0.5" stop-color="#fbfbfb"/><stop offset="0.75" stop-color="#e9eaec"/><stop offset="1" stop-color="#bfc3c8"/></radialGradient>
<radialGradient id="hC"><stop offset="0" stop-color="#fff" stop-opacity="0.85"/><stop offset="0.35" stop-color="#fff" stop-opacity="0.45"/><stop offset="1" stop-color="#fff" stop-opacity="0"/></radialGradient>
<radialGradient id="hO"><stop offset="0" stop-color="#ffb0a0" stop-opacity="0.8"/><stop offset="0.35" stop-color="#ff7060" stop-opacity="0.45"/><stop offset="1" stop-color="#ff4030" stop-opacity="0"/></radialGradient>
<radialGradient id="hH"><stop offset="0" stop-color="#fff" stop-opacity="0.9"/><stop offset="1" stop-color="#fff" stop-opacity="0"/></radialGradient>
<filter id="soft" x="-5%" y="-5%" width="110%" height="110%"><feGaussianBlur stdDeviation="1.05"/></filter>
</defs><g filter="url(#soft)" stroke-linecap="butt">
<line x1="704.6" y1="322.1" x2="681.3" y2="357.3" stroke="#cf0000" stroke-width="11.4"/><line x1="704.6" y1="322.1" x2="681.3" y2="357.3" stroke="#f20404" stroke-width="7.8"/><line x1="704.6" y1="322.1" x2="681.3" y2="357.3" stroke="#ff2418" stroke-width="3.4"/><line x1="730.3" y1="283.5" x2="704.5" y2="322.4" stroke="#a6a7a8" stroke-width="11.4"/><line x1="730.3" y1="283.5" x2="704.5" y2="322.4" stroke="#bcbcbd" stroke-width="7.8"/><line x1="730.3" y1="283.5" x2="704.5" y2="322.4" stroke="#c8c8c9" stroke-width="3.4"/>
<circle cx="681.3" cy="357.3" r="24.3" fill="url(#gO)"/><circle cx="687.9" cy="351.5" r="6.5" fill="url(#hO)"/>
<circle cx="885.9" cy="367.3" r="24.0" fill="url(#gH)"/><circle cx="891.9" cy="361.3" r="7" fill="url(#hH)"/>
<line x1="868.5" y1="346.0" x2="847.5" y2="320.4" stroke="#a6a7a8" stroke-width="11.4"/><line x1="868.5" y1="346.0" x2="847.5" y2="320.4" stroke="#bcbcbd" stroke-width="7.8"/><line x1="868.5" y1="346.0" x2="847.5" y2="320.4" stroke="#c8c8c9" stroke-width="3.4"/><line x1="879.1" y1="359.0" x2="868.3" y2="345.8" stroke="#d4d8dc" stroke-width="11.4"/><line x1="879.1" y1="359.0" x2="868.3" y2="345.8" stroke="#f1f2f4" stroke-width="7.8"/><line x1="879.1" y1="359.0" x2="868.3" y2="345.8" stroke="#ffffff" stroke-width="3.4"/>
<line x1="730.3" y1="283.5" x2="847.5" y2="320.4" stroke="#a6a7a8" stroke-width="11.4"/><line x1="730.3" y1="283.5" x2="847.5" y2="320.4" stroke="#bcbcbd" stroke-width="7.8"/><line x1="730.3" y1="283.5" x2="847.5" y2="320.4" stroke="#c8c8c9" stroke-width="3.4"/>
<line x1="667.6" y1="229.0" x2="730.3" y2="283.5" stroke="#a6a7a8" stroke-width="11.4"/><line x1="667.6" y1="229.0" x2="730.3" y2="283.5" stroke="#bcbcbd" stroke-width="7.8"/><line x1="667.6" y1="229.0" x2="730.3" y2="283.5" stroke="#c8c8c9" stroke-width="3.4"/>
<circle cx="737.6" cy="217.9" r="24.0" fill="url(#gH)"/><circle cx="743.6" cy="211.9" r="7" fill="url(#hH)"/>
<line x1="734.3" y1="248.0" x2="730.3" y2="283.5" stroke="#a6a7a8" stroke-width="11.4"/><line x1="734.3" y1="248.0" x2="730.3" y2="283.5" stroke="#bcbcbd" stroke-width="7.8"/><line x1="734.3" y1="248.0" x2="730.3" y2="283.5" stroke="#c8c8c9" stroke-width="3.4"/><line x1="736.4" y1="228.7" x2="734.2" y2="248.3" stroke="#d4d8dc" stroke-width="11.4"/><line x1="736.4" y1="228.7" x2="734.2" y2="248.3" stroke="#f1f2f4" stroke-width="7.8"/><line x1="736.4" y1="228.7" x2="734.2" y2="248.3" stroke="#ffffff" stroke-width="3.4"/>
<circle cx="730.3" cy="283.5" r="29.4" fill="url(#gC)"/><circle cx="738.9" cy="275.7" r="7.5" fill="url(#hC)"/>
<line x1="875.2" y1="281.9" x2="900.6" y2="246.7" stroke="#cf0000" stroke-width="11.4"/><line x1="875.2" y1="281.9" x2="900.6" y2="246.7" stroke="#f20404" stroke-width="7.8"/><line x1="875.2" y1="281.9" x2="900.6" y2="246.7" stroke="#ff2418" stroke-width="3.4"/><line x1="847.5" y1="320.4" x2="875.4" y2="281.6" stroke="#a6a7a8" stroke-width="11.4"/><line x1="847.5" y1="320.4" x2="875.4" y2="281.6" stroke="#bcbcbd" stroke-width="7.8"/><line x1="847.5" y1="320.4" x2="875.4" y2="281.6" stroke="#c8c8c9" stroke-width="3.4"/>
<circle cx="900.6" cy="246.7" r="24.3" fill="url(#gO)"/><circle cx="907.2" cy="240.9" r="6.5" fill="url(#hO)"/>
<line x1="849.7" y1="320.4" x2="846.0" y2="400.3" stroke="#a6a7a8" stroke-width="11.4"/><line x1="849.7" y1="320.4" x2="846.0" y2="400.3" stroke="#bcbcbd" stroke-width="7.8"/><line x1="849.7" y1="320.4" x2="846.0" y2="400.3" stroke="#c8c8c9" stroke-width="3.4"/>
<circle cx="847.5" cy="320.4" r="29.4" fill="url(#gC)"/><circle cx="856.1" cy="312.6" r="7.5" fill="url(#hC)"/>
<line x1="667.6" y1="229.0" x2="662.1" y2="309.3" stroke="#a6a7a8" stroke-width="11.4"/><line x1="667.6" y1="229.0" x2="662.1" y2="309.3" stroke="#bcbcbd" stroke-width="7.8"/><line x1="667.6" y1="229.0" x2="662.1" y2="309.3" stroke="#c8c8c9" stroke-width="3.4"/>
<line x1="689.8" y1="187.6" x2="710.1" y2="149.9" stroke="#cf0000" stroke-width="11.4"/><line x1="689.8" y1="187.6" x2="710.1" y2="149.9" stroke="#f20404" stroke-width="7.8"/><line x1="689.8" y1="187.6" x2="710.1" y2="149.9" stroke="#ff2418" stroke-width="3.4"/><line x1="667.6" y1="229.0" x2="689.9" y2="187.4" stroke="#a6a7a8" stroke-width="11.4"/><line x1="667.6" y1="229.0" x2="689.9" y2="187.4" stroke="#bcbcbd" stroke-width="7.8"/><line x1="667.6" y1="229.0" x2="689.9" y2="187.4" stroke="#c8c8c9" stroke-width="3.4"/>
<circle cx="710.1" cy="149.9" r="24.3" fill="url(#gO)"/><circle cx="716.7" cy="144.1" r="6.5" fill="url(#hO)"/>
<line x1="620.3" y1="220.3" x2="577.3" y2="212.4" stroke="#d4d8dc" stroke-width="11.4"/><line x1="620.3" y1="220.3" x2="577.3" y2="212.4" stroke="#f1f2f4" stroke-width="7.8"/><line x1="620.3" y1="220.3" x2="577.3" y2="212.4" stroke="#ffffff" stroke-width="3.4"/><line x1="667.6" y1="229.0" x2="620.0" y2="220.2" stroke="#a6a7a8" stroke-width="11.4"/><line x1="667.6" y1="229.0" x2="620.0" y2="220.2" stroke="#bcbcbd" stroke-width="7.8"/><line x1="667.6" y1="229.0" x2="620.0" y2="220.2" stroke="#c8c8c9" stroke-width="3.4"/>
<circle cx="577.3" cy="212.4" r="24.0" fill="url(#gH)"/><circle cx="583.3" cy="206.4" r="7" fill="url(#hH)"/>
<circle cx="667.6" cy="229.0" r="29.4" fill="url(#gC)"/><circle cx="676.2" cy="221.2" r="7.5" fill="url(#hC)"/>
<line x1="636.1" y1="349.8" x2="612.3" y2="386.8" stroke="#cf0000" stroke-width="11.4"/><line x1="636.1" y1="349.8" x2="612.3" y2="386.8" stroke="#f20404" stroke-width="7.8"/><line x1="636.1" y1="349.8" x2="612.3" y2="386.8" stroke="#ff2418" stroke-width="3.4"/><line x1="662.1" y1="309.3" x2="635.9" y2="350.0" stroke="#a6a7a8" stroke-width="11.4"/><line x1="662.1" y1="309.3" x2="635.9" y2="350.0" stroke="#bcbcbd" stroke-width="7.8"/><line x1="662.1" y1="309.3" x2="635.9" y2="350.0" stroke="#c8c8c9" stroke-width="3.4"/>
<circle cx="612.3" cy="386.8" r="24.3" fill="url(#gO)"/><circle cx="618.9" cy="381.0" r="6.5" fill="url(#hO)"/>
<line x1="662.1" y1="309.3" x2="780.7" y2="347.7" stroke="#a6a7a8" stroke-width="11.4"/><line x1="662.1" y1="309.3" x2="780.7" y2="347.7" stroke="#bcbcbd" stroke-width="7.8"/><line x1="662.1" y1="309.3" x2="780.7" y2="347.7" stroke="#c8c8c9" stroke-width="3.4"/>
<circle cx="662.1" cy="309.3" r="29.4" fill="url(#gC)"/><circle cx="670.7" cy="301.5" r="7.5" fill="url(#hC)"/>
<line x1="641.5" y1="285.7" x2="622.6" y2="264.0" stroke="#d4d8dc" stroke-width="11.4"/><line x1="641.5" y1="285.7" x2="622.6" y2="264.0" stroke="#f1f2f4" stroke-width="7.8"/><line x1="641.5" y1="285.7" x2="622.6" y2="264.0" stroke="#ffffff" stroke-width="3.4"/><line x1="652.4" y1="298.3" x2="641.3" y2="285.5" stroke="#a6a7a8" stroke-width="11.4"/><line x1="652.4" y1="298.3" x2="641.3" y2="285.5" stroke="#bcbcbd" stroke-width="7.8"/><line x1="652.4" y1="298.3" x2="641.3" y2="285.5" stroke="#c8c8c9" stroke-width="3.4"/>
<circle cx="622.6" cy="264.0" r="24.0" fill="url(#gH)"/><circle cx="628.6" cy="258.0" r="7" fill="url(#hH)"/>
<circle cx="771.9" cy="413.7" r="24.0" fill="url(#gH)"/><circle cx="777.9" cy="407.7" r="7" fill="url(#hH)"/>
<line x1="775.9" y1="383.4" x2="780.7" y2="347.7" stroke="#a6a7a8" stroke-width="11.4"/><line x1="775.9" y1="383.4" x2="780.7" y2="347.7" stroke="#bcbcbd" stroke-width="7.8"/><line x1="775.9" y1="383.4" x2="780.7" y2="347.7" stroke="#c8c8c9" stroke-width="3.4"/><line x1="773.3" y1="403.0" x2="776.0" y2="383.1" stroke="#d4d8dc" stroke-width="11.4"/><line x1="773.3" y1="403.0" x2="776.0" y2="383.1" stroke="#f1f2f4" stroke-width="7.8"/><line x1="773.3" y1="403.0" x2="776.0" y2="383.1" stroke="#ffffff" stroke-width="3.4"/>
<line x1="802.7" y1="314.5" x2="829.8" y2="273.5" stroke="#cf0000" stroke-width="11.4"/><line x1="802.7" y1="314.5" x2="829.8" y2="273.5" stroke="#f20404" stroke-width="7.8"/><line x1="802.7" y1="314.5" x2="829.8" y2="273.5" stroke="#ff2418" stroke-width="3.4"/><line x1="780.7" y1="347.7" x2="802.8" y2="314.3" stroke="#a6a7a8" stroke-width="11.4"/><line x1="780.7" y1="347.7" x2="802.8" y2="314.3" stroke="#bcbcbd" stroke-width="7.8"/><line x1="780.7" y1="347.7" x2="802.8" y2="314.3" stroke="#c8c8c9" stroke-width="3.4"/>
<circle cx="829.8" cy="273.5" r="24.3" fill="url(#gO)"/><circle cx="836.4" cy="267.7" r="6.5" fill="url(#hO)"/>
<line x1="780.7" y1="347.7" x2="843.8" y2="400.3" stroke="#a6a7a8" stroke-width="11.4"/><line x1="780.7" y1="347.7" x2="843.8" y2="400.3" stroke="#bcbcbd" stroke-width="7.8"/><line x1="780.7" y1="347.7" x2="843.8" y2="400.3" stroke="#c8c8c9" stroke-width="3.4"/>
<circle cx="780.7" cy="347.7" r="29.4" fill="url(#gC)"/><circle cx="789.3" cy="339.9" r="7.5" fill="url(#hC)"/>
<line x1="890.5" y1="410.6" x2="933.0" y2="419.9" stroke="#d4d8dc" stroke-width="11.4"/><line x1="890.5" y1="410.6" x2="933.0" y2="419.9" stroke="#f1f2f4" stroke-width="7.8"/><line x1="890.5" y1="410.6" x2="933.0" y2="419.9" stroke="#ffffff" stroke-width="3.4"/><line x1="843.8" y1="400.3" x2="890.8" y2="410.6" stroke="#a6a7a8" stroke-width="11.4"/><line x1="843.8" y1="400.3" x2="890.8" y2="410.6" stroke="#bcbcbd" stroke-width="7.8"/><line x1="843.8" y1="400.3" x2="890.8" y2="410.6" stroke="#c8c8c9" stroke-width="3.4"/>
<circle cx="933.0" cy="419.9" r="24.0" fill="url(#gH)"/><circle cx="939.0" cy="413.9" r="7" fill="url(#hH)"/>
<line x1="820.7" y1="441.8" x2="799.6" y2="479.6" stroke="#cf0000" stroke-width="11.4"/><line x1="820.7" y1="441.8" x2="799.6" y2="479.6" stroke="#f20404" stroke-width="7.8"/><line x1="820.7" y1="441.8" x2="799.6" y2="479.6" stroke="#ff2418" stroke-width="3.4"/><line x1="843.8" y1="400.3" x2="820.5" y2="442.0" stroke="#a6a7a8" stroke-width="11.4"/><line x1="843.8" y1="400.3" x2="820.5" y2="442.0" stroke="#bcbcbd" stroke-width="7.8"/><line x1="843.8" y1="400.3" x2="820.5" y2="442.0" stroke="#c8c8c9" stroke-width="3.4"/>
<circle cx="799.6" cy="479.6" r="24.3" fill="url(#gO)"/><circle cx="806.2" cy="473.8" r="6.5" fill="url(#hO)"/>
<circle cx="843.8" cy="400.3" r="29.4" fill="url(#gC)"/><circle cx="852.4" cy="392.5" r="7.5" fill="url(#hC)"/>
</g>
<g filter="url(#soft)" transform="translate(732.0,151.5)" stroke-linecap="round" stroke-linejoin="round"><line x1="13.6" y1="18.2" x2="8.3" y2="13.9" stroke="#05163a" stroke-width="4.7"/><line x1="14.2" y1="15.2" x2="10.7" y2="9.3" stroke="#05163a" stroke-width="4.3"/><line x1="16" y1="14.5" x2="15.1" y2="8.1" stroke="#05163a" stroke-width="4.3"/><line x1="18" y1="14.8" x2="18.8" y2="9.1" stroke="#05163a" stroke-width="4.3"/><line x1="20.2" y1="16.2" x2="22.2" y2="11.2" stroke="#05163a" stroke-width="4.3"/><path d="M11.6 14.6 L21.6 14.2 L21.6 17.6 L19.9 23.0 L13.3 23.0 L11 19 Z" fill="#05163a" stroke="#05163a" stroke-width="2.2"/><line x1="13.6" y1="18.2" x2="8.3" y2="13.9" stroke="#fff" stroke-width="2.9"/><line x1="14.2" y1="15.2" x2="10.7" y2="9.3" stroke="#fff" stroke-width="2.5"/><line x1="16" y1="14.5" x2="15.1" y2="8.1" stroke="#fff" stroke-width="2.5"/><line x1="18" y1="14.8" x2="18.8" y2="9.1" stroke="#fff" stroke-width="2.5"/><line x1="20.2" y1="16.2" x2="22.2" y2="11.2" stroke="#fff" stroke-width="2.5"/><path d="M11.6 14.6 L21.6 14.2 L21.6 17.6 L19.9 23.0 L13.3 23.0 L11 19 Z" fill="#fff" stroke="#fff" stroke-width="0.6"/><path d="M12.6 14.4 L15.5 16.2" stroke="#222" stroke-width="1.4"/><circle cx="16.6" cy="16.2" r="1.9" fill="#050505"/></g>
</svg><!--MOL-E--></div>
<div id="status" class="abs"><span class="abs" style="left:4px;top:5px;white-space:nowrap">Around X: -0.42? around Y: 2.18</span></div>
<!--TOPX-S--><div class="abs" style="left:248px;top:8px;width:108px;height:13px;background:#7f8fac;opacity:.7;filter:blur(4px);border-radius:7px"></div>
<div class="abs" style="left:520px;top:8px;width:60px;height:12px;background:#95a6c2;opacity:.4;filter:blur(5px);border-radius:6px"></div>
<div class="abs" style="left:735px;top:9px;width:50px;height:12px;background:#8fa0bd;opacity:.45;filter:blur(5px);border-radius:6px"></div>
<div class="abs" style="left:800px;top:9px;width:16px;height:12px;background:#8696b4;opacity:.5;filter:blur(4px);border-radius:6px"></div>
<div class="abs" style="left:416px;top:-3px;width:796px;height:5px;background:#1a1f2a;filter:blur(.9px);border-radius:0 0 3px 3px"></div>
<svg class="abs" style="left:9.5px;top:6.5px;filter:blur(.4px)" width="17" height="17" viewBox="0 0 17 17"><circle cx="8.5" cy="8.5" r="8" fill="#c81f6e"/><circle cx="8.5" cy="8.5" r="8" fill="none" stroke="#e86aa6" stroke-width="1"/><text x="8.5" y="11.3" text-anchor="middle" font-size="7.5" font-weight="700" fill="#fff" font-family="Liberation Sans,sans-serif">3D</text></svg>
<div class="abs" style="left:1262px;top:2px;width:42px;height:24px;background:#4a5d80;opacity:.55;filter:blur(6px);border-radius:12px"></div>
<div class="abs" style="left:1221.5px;top:-33px;width:53px;height:53px;border-radius:50%;background:#3fbb52;border:2px solid #cfe9d2;filter:blur(.5px)"></div>
<div class="abs" style="left:1232px;top:-1px;width:32px;text-align:center;font-size:11.5px;line-height:14px;font-weight:700;font-style:italic;color:#f4fff4">70</div>
<div class="abs" style="left:1315px;top:5px;width:87px;height:23px;background:#a87b96;filter:blur(3px);border-radius:11px;opacity:.95"></div>
<div class="abs" style="left:1330px;top:12px;width:52px;height:7px;background:#c9a6b8;filter:blur(3px);border-radius:4px;opacity:.8"></div>
<div class="abs" style="left:1412.5px;top:-2px;width:115px;height:22.5px;border:1px solid #6d7f9c;border-radius:0 0 6px 6px;background:linear-gradient(180deg,#e4ecf8 0,#cfdcef 45%,#b4c6e2 50%,#c6d6ee 100%);box-shadow:0 0 0 1px rgba(255,255,255,.6);overflow:hidden"><div class="abs" style="left:31px;top:0;width:1px;height:22px;background:#7b8ca8"></div><div class="abs" style="left:60px;top:0;width:55px;height:22px;background:linear-gradient(180deg,#e9a391 0,#d9685a 45%,#c93a2b 50%,#d85c40 100%);border-left:1px solid #7a3a36"></div><div class="abs" style="left:9px;top:11px;width:13px;height:5px;border:1px solid #5b6a84;background:#fff;border-radius:1px"></div><div class="abs" style="left:40px;top:5px;width:13px;height:11px;border:1px solid #5b6a84;background:#f4f7fc;border-radius:1px"></div><div class="abs" style="left:43.5px;top:8.5px;width:6px;height:4px;border:1px solid #5b6a84;background:#c6d3e8"></div><div class="abs" style="left:60px;top:-1px;width:55px;text-align:center;font-size:16px;line-height:22px;font-weight:700;color:#fff;text-shadow:0 0 2px #5a1a14,0 0 1px #5a1a14">x</div></div>
<div class="abs" style="left:1401px;top:785px;width:30px;height:21px;border-left:1px solid #c3cfe2;border-right:1px solid #e9f0fa;text-align:center;font-size:12px;line-height:21px;color:#a9b6cc;font-weight:400;letter-spacing:-.2px">CAP</div>
<div class="abs" style="left:1432px;top:785px;width:38px;height:21px;border-left:1px solid #c3cfe2;border-right:1px solid #e9f0fa;text-align:center;font-size:12px;line-height:21px;color:#3d5795;font-weight:700;letter-spacing:-.2px">NUM</div>
<div class="abs" style="left:1471px;top:785px;width:36px;height:21px;border-left:1px solid #c3cfe2;border-right:1px solid #e9f0fa;text-align:center;font-size:12px;line-height:21px;color:#b3bfd2;font-weight:400;letter-spacing:-.2px">SCRL</div>
<div class="abs" style="left:1521px;top:802px;width:2px;height:2px;background:#8797b6"></div>
<div class="abs" style="left:1517px;top:802px;width:2px;height:2px;background:#8797b6"></div>
<div class="abs" style="left:1513px;top:802px;width:2px;height:2px;background:#8797b6"></div>
<div class="abs" style="left:1521px;top:798px;width:2px;height:2px;background:#8797b6"></div>
<div class="abs" style="left:1517px;top:798px;width:2px;height:2px;background:#8797b6"></div>
<div class="abs" style="left:1521px;top:794px;width:2px;height:2px;background:#8797b6"></div><!--TOPX-E-->
<div id="frame-b" class="abs"></div>
<div id="taskbar" class="abs"><!--TASK-S--><div class="abs" style="left:0px;top:0px;width:1536px;height:44px;background:linear-gradient(90deg,#1a2028 0,#2b323a 3%,#39414a 8%,#262c34 12%,#30373f 30%,#2a3138 36%,#3a444c 39%,#4a5a52 41.5%,#35403e 44%,#2b3238 47%,#3d464e 50%,#30373f 54%,#464f58 58%,#39424a 61%,#4a535c 63%,#363e46 66%,#3f4851 70%,#2e353d 74%,#363e46 80%,#2a3037 86%,#20262d 92%,#1b2027 100%)"></div>
<div class="abs" style="left:0px;top:0px;width:1536px;height:44px;background:linear-gradient(180deg,rgba(255,255,255,.16) 0,rgba(255,255,255,.05) 45%,rgba(0,0,0,.12) 55%,rgba(0,0,0,.25) 100%)"></div>
<div class="abs" style="left:612px;top:2px;width:60px;height:42px;background:linear-gradient(100deg,rgba(120,170,110,0) 20%,rgba(130,180,120,.55) 45%,rgba(120,170,110,0) 70%);filter:blur(3px)"></div>
<div class="abs" style="left:0px;top:0px;width:1536px;height:1px;background:#59616b"></div>
<div class="abs" style="left:9px;top:1px;width:43px;height:43px;border-radius:50%;background:radial-gradient(circle at 50% 30%,#9fd0ee 0,#3d86c4 38%,#1b4f8f 62%,#0d2b58 100%);box-shadow:0 0 3px 1px rgba(120,190,240,.6), inset 0 -6px 8px rgba(60,200,255,.55)"></div>
<svg class="abs" style="left:20.0px;top:11.0px;filter:blur(.5px);transform:scale(1.25)" width="22" height="23" viewBox="0 0 22 23"><path d="M3 4.5 Q7 2.5 10.5 4.5 L9.7 11 Q6.5 9.5 2.2 11.2 Z" fill="#f0642a"/><path d="M12 5 Q15.5 6.8 19.5 4.6 L18.6 11.2 Q15 13 11.2 11.3 Z" fill="#8cc83c"/><path d="M2 12.8 Q6 11 9.5 12.8 L8.7 19.3 Q5.5 17.8 1.2 19.5 Z" fill="#3aa0e8"/><path d="M11 13.2 Q14.5 15 18.4 12.8 L17.6 19.2 Q14 21 10.2 19.4 Z" fill="#f8c020"/></svg>
<svg class="abs" style="left:81.0px;top:4.0px;filter:blur(.5px)" width="38" height="35" viewBox="0 0 38 35"><path d="M31.5 9 Q36 0.5 27.5 2.5 Q17 5.5 7 17.5 Q-1 28.5 3.5 31.5 Q7.5 33 14 27.5" fill="none" stroke="#e0b62a" stroke-width="3"/><path d="M8.5 19.5 Q9 7.5 20.5 7.5 Q32.5 8 32 20.8 H15.5 Q16 25.5 20.8 25.5 Q24 25.5 25 22.8 H31.5 Q29 31.5 20.5 31.5 Q9 31 8.5 19.5 Z M15.8 16.2 H25.4 Q24.8 12.8 20.6 12.8 Q16.6 12.8 15.8 16.2 Z" fill="#4cc4f6" stroke="#1f84d0" stroke-width="1.1" fill-rule="evenodd"/><path d="M3.5 31.5 Q7.5 33 14 27.5" fill="none" stroke="#e0b62a" stroke-width="3"/></svg>
<div class="abs" style="left:137px;top:0.5px;width:65px;height:42.5px;background:linear-gradient(180deg,rgba(255,255,255,.26) 0,rgba(255,255,255,.12) 48%,rgba(255,255,255,.04) 52%,rgba(255,255,255,.12) 100%);border:1px solid rgba(255,255,255,.38);border-radius:3px;box-shadow:0 0 0 1px rgba(0,0,0,.45)"></div>
<div class="abs" style="left:207px;top:0.5px;width:65px;height:42.5px;background:linear-gradient(180deg,rgba(255,255,255,.26) 0,rgba(255,255,255,.12) 48%,rgba(255,255,255,.04) 52%,rgba(255,255,255,.12) 100%);border:1px solid rgba(255,255,255,.38);border-radius:3px;box-shadow:0 0 0 1px rgba(0,0,0,.45)"></div>
<div class="abs" style="left:277px;top:0.5px;width:65px;height:42.5px;background:linear-gradient(180deg,rgba(255,255,255,.26) 0,rgba(255,255,255,.12) 48%,rgba(255,255,255,.04) 52%,rgba(255,255,255,.12) 100%);border:1px solid rgba(255,255,255,.38);border-radius:3px;box-shadow:0 0 0 1px rgba(0,0,0,.45)"></div>
<div class="abs" style="left:347px;top:0.5px;width:65px;height:42.5px;background:linear-gradient(180deg,rgba(255,255,255,.26) 0,rgba(255,255,255,.12) 48%,rgba(255,255,255,.04) 52%,rgba(255,255,255,.12) 100%);border:1px solid rgba(255,255,255,.38);border-radius:3px;box-shadow:0 0 0 1px rgba(0,0,0,.45)"></div>
<div class="abs" style="left:417px;top:0.5px;width:65px;height:42.5px;background:linear-gradient(180deg,rgba(255,255,255,.26) 0,rgba(255,255,255,.12) 48%,rgba(255,255,255,.04) 52%,rgba(255,255,255,.12) 100%);border:1px solid rgba(255,255,255,.38);border-radius:3px;box-shadow:0 0 0 1px rgba(0,0,0,.45)"></div>
<div class="abs" style="left:486px;top:0.5px;width:65px;height:42.5px;background:linear-gradient(180deg,rgba(255,255,255,.55) 0,rgba(255,255,255,.32) 48%,rgba(255,255,255,.18) 52%,rgba(255,255,255,.30) 100%);border:1px solid rgba(255,255,255,.38);border-radius:3px;box-shadow:0 0 0 1px rgba(0,0,0,.45)"></div>
<svg class="abs" style="left:153.0px;top:6.0px;filter:blur(.5px)" width="34" height="33" viewBox="0 0 34 33"><rect x="0.5" y="0.5" width="32" height="32" rx="3.5" fill="#2d7bf0"/><path d="M5.5 9 L10.5 24 L15 13 L19.5 24 L26 9" fill="none" stroke="#fff" stroke-width="2.6" stroke-linejoin="miter"/><path d="M5.5 9 H26" stroke="#fff" stroke-width="2.2"/><circle cx="27.5" cy="27" r="4.8" fill="#f58a3c" stroke="#ffd0a8" stroke-width="1"/></svg>
<svg class="abs" style="left:224.0px;top:5.5px;filter:blur(.5px)" width="32" height="32" viewBox="0 0 32 32"><circle cx="16" cy="16" r="15" fill="#2f7a2a"/><circle cx="16" cy="16" r="12.3" fill="none" stroke="#9ad08c" stroke-width="1.4"/><circle cx="16" cy="16" r="15" fill="none" stroke="#1d5a1a" stroke-width="1.2"/><text x="16" y="21" text-anchor="middle" font-size="13.5" font-weight="700" fill="#f4fff0" font-family="Liberation Sans,sans-serif" letter-spacing="-0.5">CD</text><circle cx="25.5" cy="6.5" r="2.6" fill="#d8f0c8"/></svg>
<svg class="abs" style="left:292.0px;top:5.0px;filter:blur(.5px)" width="34" height="34" viewBox="0 0 34 34"><rect x="0.5" y="0.5" width="33" height="33" rx="3" fill="#2a8cf2"/><rect x="7" y="11" width="20" height="15.5" rx="2" fill="#fff"/><path d="M12 5.5 L15 10.5 M22 5.5 L19 10.5" stroke="#fff" stroke-width="2.2"/><path d="M14.5 14.5 L21 18.7 L14.5 23 Z" fill="#2a8cf2"/></svg>
<svg class="abs" style="left:361.5px;top:6.0px;filter:blur(.5px)" width="35" height="33" viewBox="0 0 35 33"><path d="M2 8 Q2 5 5 5 H13 L15.5 8 H31 Q33 8 33 10 V30 H2 Z" fill="#e6c860" stroke="#b89a38" stroke-width="1"/><rect x="5" y="3.5" width="11" height="6" fill="#f4f4f0" stroke="#c8c8b8" stroke-width=".6"/><rect x="16.5" y="5" width="4" height="4" fill="#d04040"/><rect x="21.5" y="5" width="4" height="4" fill="#50a050"/><path d="M2 12 H33 V30 H2 Z" fill="#f2dc8a" stroke="#c4a648" stroke-width="1"/><path d="M9 21 H26 V28 Q26 30 24 30 H11 Q9 30 9 28 Z" fill="#8ccaf0" stroke="#5aa0d0" stroke-width="1"/><rect x="12" y="24.5" width="11" height="2.5" fill="#d8f0ff"/></svg>
<svg class="abs" style="left:431.5px;top:5.5px;filter:blur(.5px)" width="34" height="34" viewBox="0 0 34 34"><circle cx="17" cy="17" r="16.5" fill="#3296fa"/><path d="M9 8.5 Q16 10.5 25 12 Q24.5 16 21.5 19 L23.5 19.5 L16.5 28 L18 22.5 Q12.5 21 10.5 16.5 Q13.5 17.5 16 17.5 Q10.5 14.5 9 8.5 Z" fill="#fff"/></svg>
<svg class="abs" style="left:500.5px;top:3.5px;filter:blur(.5px)" width="34" height="34" viewBox="0 0 34 34"><path d="M17 1 L31 8.5 V25.5 L17 33 L3 25.5 V8.5 Z" fill="#b31d6e" stroke="#7c0f48" stroke-width="1"/><path d="M17 4.5 L28 10.5 V23.5 L17 29.5 L6 23.5 V10.5 Z" fill="#c82a80"/><text x="17" y="22" text-anchor="middle" font-size="13.5" font-weight="700" fill="#fff" font-family="Liberation Sans,sans-serif" letter-spacing="-0.6">3D</text><circle cx="28.5" cy="6" r="3.8" fill="#e8e8ee" stroke="#9a9aa8" stroke-width=".8"/></svg>
<svg class="abs" style="left:1179.0px;top:13.0px;filter:blur(.4px)" width="18" height="17" viewBox="0 0 18 17"><rect x="1" y="6" width="16" height="9" rx="1.5" fill="#c8ccd2" stroke="#8e949c" stroke-width="1"/><path d="M4 9 H14 M4 12 H14" stroke="#70767e" stroke-width="1.2" stroke-dasharray="1.6 1"/><path d="M8 5.5 Q9 2 15 1.5" fill="none" stroke="#b8bcc2" stroke-width="1"/></svg>
<svg class="abs" style="left:1205.5px;top:8.5px;filter:blur(.3px)" width="12" height="17" viewBox="0 0 12 17"><path d="M2.5 6.5 H8.5 V3 H2.5 Z M4.5 3 V1.2 H10.5 V4.8 H8.5" fill="none" stroke="#e9edf2" stroke-width="1.2"/><path d="M3.5 13 H8.5 L6 16 Z" fill="#e9edf2"/></svg>
<svg class="abs" style="left:1226.5px;top:12.5px;filter:blur(.4px)" width="20" height="20" viewBox="0 0 20 20"><circle cx="10" cy="10" r="9.3" fill="#2f92f4" stroke="#9cc8f8" stroke-width=".8"/><path d="M5 4.8 Q9.5 6 14.5 7 Q14.2 9.5 12.5 11 L13.6 11.4 L9.6 16.4 L10.4 13.2 Q7.2 12.4 6 9.6 Q7.8 10.2 9.2 10.2 Q6 8.4 5 4.8 Z" fill="#fff"/></svg>
<svg class="abs" style="left:1254.0px;top:13.0px;filter:blur(.4px)" width="18" height="19" viewBox="0 0 18 19"><path d="M4 3 H13 V9 H4 Z" fill="#e8d8c0" stroke="#a04028" stroke-width="1"/><circle cx="8" cy="6" r="2" fill="#b83020"/><path d="M2 17.5 Q2 10.5 8.5 10.5 Q15 10.5 15 17.5 Z" fill="#f0902c"/><circle cx="13" cy="14" r="4" fill="#f6a030" stroke="#ffd890" stroke-width=".8"/><path d="M11 14 h4" stroke="#fff" stroke-width="1.2"/></svg>
<svg class="abs" style="left:1280.5px;top:12.5px;filter:blur(.4px)" width="20" height="20" viewBox="0 0 20 20"><circle cx="10" cy="10" r="9.3" fill="#d8d020"/><circle cx="10" cy="10" r="6.6" fill="#58b838"/><path d="M10 5.5 V14.5 M5.5 10 H14.5" stroke="#fff8c0" stroke-width="2.4"/></svg>
<svg class="abs" style="left:1310.5px;top:16.5px;filter:blur(.3px)" width="15" height="14" viewBox="0 0 15 14"><path d="M1 12.5 V11 M4 12.5 V9 M7 12.5 V6.5 M10 12.5 V4 M13 12.5 V1.5" stroke="#e9edf2" stroke-width="1.8"/></svg>
<svg class="abs" style="left:1334.5px;top:13.0px;filter:blur(.4px)" width="17" height="19" viewBox="0 0 17 19"><rect x="2" y="4" width="10" height="14" rx="1.5" fill="#e9edf2"/><rect x="4.5" y="1.8" width="5" height="3" fill="#e9edf2"/><path d="M10.5 2 L15.5 2 M13 2 V9.5 M10.5 6 H15.5" stroke="#e9edf2" stroke-width="1.6"/><rect x="4" y="8" width="6" height="3" fill="#2a3038"/></svg>
<svg class="abs" style="left:1361.5px;top:13.5px;filter:blur(.3px)" width="18" height="18" viewBox="0 0 18 18"><path d="M1.5 6.5 H5 L9.5 2 V16 L5 11.5 H1.5 Z" fill="#e9edf2"/><path d="M11.5 5.5 Q14 9 11.5 12.5 M13.8 3.2 Q18 9 13.8 14.8" fill="none" stroke="#e9edf2" stroke-width="1.4"/></svg>
<div class="abs clk" style="left:1394px;top:3px;width:122px">下午 10:18</div>
<div class="abs clk" style="left:1394px;top:24px;width:122px;letter-spacing:.5px">2020/3/16 星期一</div>
<div class="abs" style="left:1521px;top:0.5px;width:14px;height:43px;background:linear-gradient(180deg,rgba(255,255,255,.28),rgba(255,255,255,.06) 50%,rgba(255,255,255,.14));border:1px solid rgba(255,255,255,.3);box-shadow:0 0 0 1px rgba(0,0,0,.5)"></div><!--TASK-E--></div>
<div id="panel" class="abs">
 <div id="p-head" class="abs"><svg class="abs" style="left:269px;top:7px" width="14" height="14" viewBox="0 0 14 14"><path d="M1.5 1.5 L12.5 12.5 M12.5 1.5 L1.5 12.5" stroke="#a9abb2" stroke-width="1.5" fill="none"/></svg></div>
 <div id="p-stats" class="abs"></div>
 <div class="abs num" style="left:44px">66</div>
 <div class="abs num" style="left:179px;letter-spacing:1px">114</div>
 <div class="abs lab" style="left:36px">点赞数</div>
 <div class="abs lab" style="left:171px">观看人数</div>
 <div id="p-msgt" class="abs">消息</div>
 <div id="p-list" class="abs">
  <div id="p-scroll" class="abs"></div>
  <div class="abs m" style="top:11px">卞亚元：夏旭东，我来围观你的直播啦，为<br>你点赞！</div>
  <div class="abs m" style="top:59px">刘格丽：夏旭东，我来围观你的直播啦，为<br>你点赞！</div>
  <div class="abs av" style="top:104px">豪</div>
  <div class="abs u" style="top:107px"><i>魏宇豪(魏宇豪):</i> 氨基的顺反化学键<br>不同吗？</div>
  <div class="abs av" style="top:153px">豪</div>
  <div class="abs u" style="top:157px"><i>魏宇豪(魏宇豪):</i> 明白了</div>
  <div class="abs m" style="top:193.5px">伊力扎提丶<span style="margin-left:-5px"> </span>：夏旭东，我来围观你的直播啦<br>，为你点赞！</div>
  <div class="abs av" style="top:240px">伟</div>
  <div class="abs u" style="top:244px"><i>赵康伟(赵康伟):</i> 三条腿的椅子</div>
  <div class="abs m" style="top:282px">马艳：夏旭东，我来围观你的直播啦，为你<br>点赞！</div>
  <div class="abs m" style="top:330px">卓林：夏旭东，我来围观你的直播啦，为你<br>点赞！</div>
 </div>
 <div id="p-input" class="abs">
  <div id="p-ph" class="abs">请输入消息</div>
  <div id="p-send" class="abs">发送</div>
 </div>
 <div id="p-tab" class="abs"><svg class="abs" style="left:2px;top:11px" width="9" height="15" viewBox="0 0 9 15"><path d="M7 1.5 L2 7.5 L7 13.5" stroke="#8a8c94" stroke-width="1.4" fill="none"/></svg></div>
</div>
<div id="chat" class="abs">
<p><b>夏旭东:</b> 欢迎大家来观看直播 <span style="margin:0 4px 0 1px">“</span>有机化学第二章3<span style="margin:0 8px 0 3px">”</span>。</p>
<p><b>王俊辉:</b> 晚上好</p>
<p><b>卓林:</b> 讲了</p>
<p><b>刘超文:</b> 讲了</p>
<p><b>魏东艳:</b> 讲了</p>
</div>
</body>
</html>
